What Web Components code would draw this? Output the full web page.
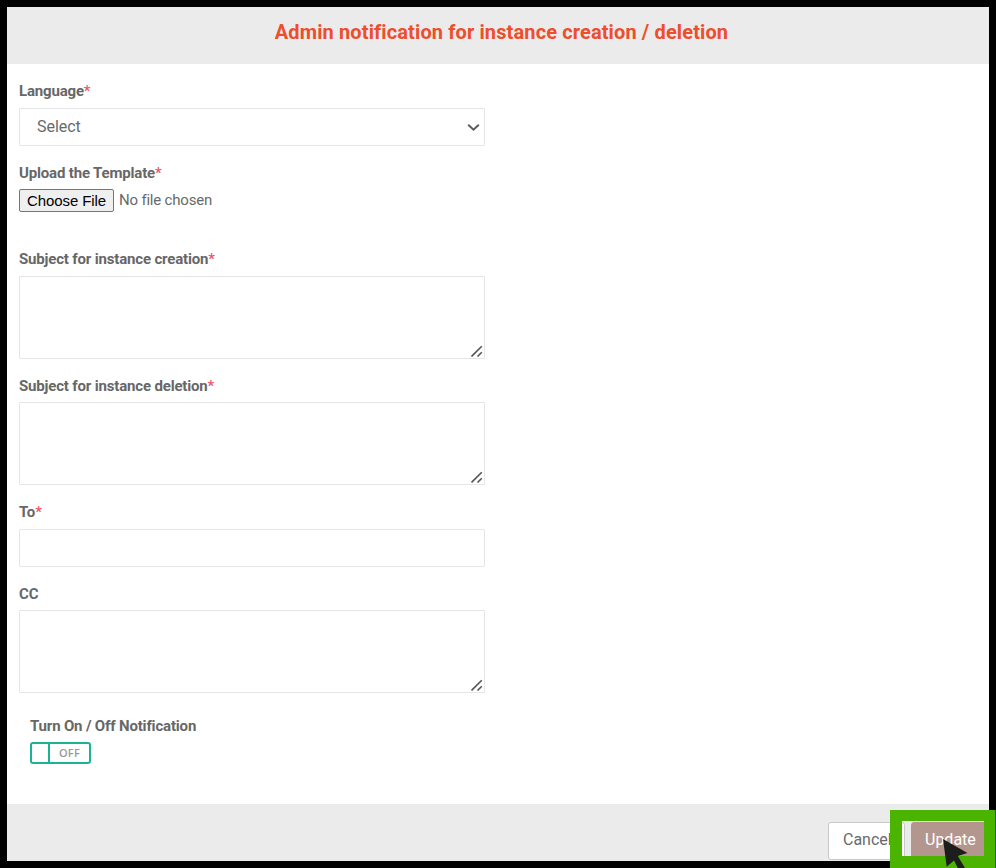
<!DOCTYPE html>
<html lang="en">
<head>
<meta charset="utf-8">
<title>Admin notification</title>
<style>
html,body{margin:0;height:868px;overflow:hidden;background:#000}
body{font-family:Roboto,"Liberation Sans",sans-serif;color:#676a6c}
</style>
</head>
<body>
<notification-dialog></notification-dialog>
<script>
function define(name, html){
  const t=document.createElement('template');
  t.innerHTML=html;
  customElements.define(name,class extends HTMLElement{
    constructor(){
      super();
      this.attachShadow({mode:'open'}).append(t.content.cloneNode(true));
    }
  });
}

define('form-field',`<style>
:host{display:block;width:466px}
.label{height:20px;line-height:20px;font-size:15px;font-weight:700;white-space:nowrap;margin-bottom:var(--gap,7px);letter-spacing:-.17px;color:#676767}
.star{color:#ed5565;font-weight:500;display:none}
:host([required]) .star{display:inline}
</style><div class="label"><slot name="label"></slot><span class="star">*</span></div><slot></slot>`);

define('select-box',`<style>
:host{display:flex;box-sizing:border-box;width:466px;height:38px;border:1px solid #e5e6e7;border-radius:1px;background:#fff;align-items:center;justify-content:space-between;padding:0 4px 1px 17px;font-size:16px;letter-spacing:-.05px}
svg{display:block;margin-top:2px}
</style><slot></slot><svg width="13" height="9" viewBox="0 0 13 9"><path d="M1.2 1.7 6.5 6.7 11.8 1.7" fill="none" stroke="#5c5c5c" stroke-width="2"/></svg>`);

define('text-box',`<style>
:host{display:block;box-sizing:border-box;height:38px;border:1px solid #e5e6e7;border-radius:1px;background:#fff}
</style>`);

define('text-area',`<style>
:host{display:flex;box-sizing:border-box;height:83px;border:1px solid #e5e6e7;border-radius:1px;background:#fff;align-items:flex-end;justify-content:flex-end;padding:1px}
svg{display:block}
</style><svg width="12" height="12" viewBox="0 0 12 12"><path d="M.5 11.5 10.8 1.2M6.5 11.5 10.8 7.2" stroke="#555" stroke-width="1.6"/></svg>`);

define('file-picker',`<style>
:host{display:flex;height:23px;align-items:center;gap:5px;font-size:15px;letter-spacing:-.2px}
.btn{box-sizing:border-box;width:95px;height:23px;border:1px solid #767676;border-radius:2px;background:#efefef;color:#000;font:15px/22px "Liberation Sans",sans-serif;text-align:center;letter-spacing:-.1px}
.state{line-height:20px;padding-bottom:2px}
</style><span class="btn">Choose File</span><span class="state">No file chosen</span>`);

define('toggle-switch',`<style>
:host{display:flex;box-sizing:border-box;width:61px;height:22px;border:2px solid #1ab394;border-radius:3px;background:#fff}
.knob{width:16px;border-right:2px solid #1ab394}
.text{flex:1;text-align:center;font:600 11px/18px "Open Sans","Noto Sans",sans-serif;color:#999;letter-spacing:.2px}
</style><span class="knob"></span><span class="text"><slot></slot></span>`);

define('action-button',`<style>
:host{display:block;box-sizing:border-box;height:38px;border:1px solid #c9c9c9;border-radius:3px;background:#fff;width:77px;padding-left:14px;font-size:16px;line-height:33px}
:host([primary]){width:78px;padding-left:13px;border-color:#b3978f;background:#b3978f;color:#fff}
</style><slot></slot>`);

define('click-highlight',`<style>
:host{position:absolute;left:890px;top:810px;width:105px;height:58px;box-sizing:border-box;border:solid #4bb400;border-width:11px 11px 12px 12px;box-shadow:1px 0 0 #246000}
svg{position:absolute;left:41px;top:18px}
</style><svg width="26" height="29" viewBox="0 0 26 29"><path d="M0 0 24.5 14 14.8 17 22 29H14.8L11 21.5 3.7 27.8Z" fill="#1d1d1b"/></svg>`);

define('notification-dialog',`<style>
:host{display:flex;flex-direction:column;box-sizing:border-box;width:996px;height:868px;padding:7px;background:#000}
header{height:57px;background:#ebebeb;color:#ed4e2b;text-align:center;font-size:20px;font-weight:700;line-height:50px;letter-spacing:.12px;padding-left:7px;box-sizing:border-box}
main{height:740px;box-sizing:border-box;background:#fff;padding:17px 12px 0;display:flex;flex-direction:column;align-items:flex-start}
footer{height:57px;box-sizing:border-box;background:#ebebeb;display:flex;justify-content:flex-end;padding:18px 0 0;gap:6px}
.lang{margin-bottom:17px}.file{--gap:6px;margin-bottom:37px}
.sub{margin-bottom:17px}.two{--gap:6px}.to{margin-bottom:17px}.cc{--gap:6px;margin-bottom:23px}
.toggle{margin-left:11px;--gap:6px}
</style>
<header>Admin notification for instance creation / deletion</header>
<main>
<form-field class="lang" required><span slot="label">Language</span><select-box>Select</select-box></form-field>
<form-field class="file" required><span slot="label">Upload the Template</span><file-picker></file-picker></form-field>
<form-field class="sub" required><span slot="label">Subject for instance creation</span><text-area></text-area></form-field>
<form-field class="sub two" required><span slot="label">Subject for instance deletion</span><text-area></text-area></form-field>
<form-field class="to" required><span slot="label">To</span><text-box></text-box></form-field>
<form-field class="cc"><span slot="label">CC</span><text-area></text-area></form-field>
<form-field class="toggle"><span slot="label">Turn On / Off Notification</span><toggle-switch>OFF</toggle-switch></form-field>
</main>
<footer><action-button>Cancel</action-button><action-button primary>Update</action-button></footer>
<click-highlight></click-highlight>`);
</script>
</body>
</html>
